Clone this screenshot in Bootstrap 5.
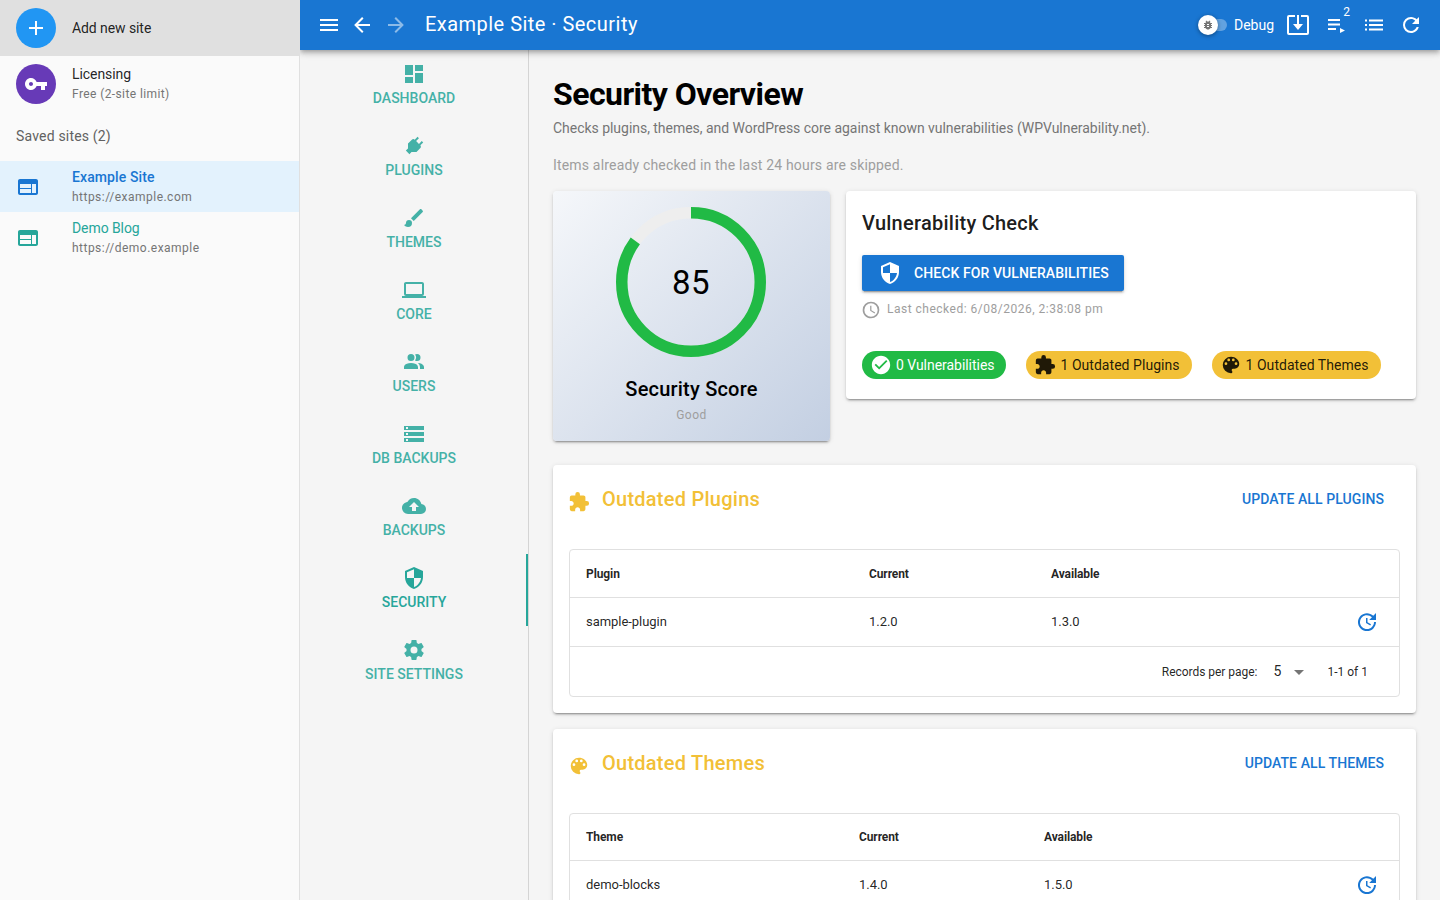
<!DOCTYPE html>
<html lang="en">
<head>
<meta charset="utf-8">
<title>Example Site · Security</title>
<link rel="stylesheet" href="https://cdn.jsdelivr.net/npm/bootstrap@5.3.0/dist/css/bootstrap.min.css">
<style>
html,body{height:100%}
body{font-family:Roboto,"Liberation Sans",sans-serif;font-size:14px;color:rgba(0,0,0,.87);background:#f5f5f5;overflow:hidden}
.ico{width:24px;height:24px;fill:currentColor;flex:none;display:block}
.ico12{width:12px;height:12px}.ico20{width:20px;height:20px}.ico22{width:22px;height:22px}
.drawer{width:300px;flex:none;background:#fafafa;border-right:1px solid #e0e0e0}
.addrow{height:56px;background:#e0e0e0;padding-left:16px;gap:16px;color:rgba(0,0,0,.87)}
.licrow{height:56px;padding-left:16px;gap:16px}
.avatar{width:40px;height:40px;border-radius:50%;color:#fff}
.av-blue{background:#2196f3}.av-purple{background:#673ab7}
.ln1{font-size:14px;line-height:18px;letter-spacing:-.08px}
.ln2{font-size:12px;line-height:18px;margin-top:2px;letter-spacing:.48px;color:#757575}
.ln2b{letter-spacing:.4px}
.addtxt{line-height:20px}
.subhead{height:49px;padding-left:16px;font-size:14px;color:#616161;letter-spacing:.18px;padding-bottom:1px}
.siterow{height:51px;padding-left:16px;gap:32px}
.siterow.sel{background:#e3f2fd;color:#1976d2}
.siterow.sel .ln1{font-weight:500;letter-spacing:.1px}
.siterow.oth{color:#26a69a}
.topbar{height:50px;flex:none;background:#1976d2;color:#fff;box-shadow:0 2px 4px -1px rgba(0,0,0,.2),0 4px 5px rgba(0,0,0,.14),0 1px 10px rgba(0,0,0,.12);position:relative;z-index:3;padding-left:17px;padding-right:17px}
.topttl{font-size:20px;letter-spacing:.47px;margin-left:17px;margin-bottom:2px}
.nav-b{margin-left:9px}.nav-f{margin-left:10px;opacity:.5}
.tog{width:27px;height:12px;border-radius:6px;background:rgba(255,255,255,.32);margin-right:7px}
.togthumb{position:absolute;left:-2px;top:-4px;width:20px;height:20px;border-radius:50%;background:#fff;color:#757575;box-shadow:0 1px 4px rgba(0,0,0,.4)}
.tb-dl{margin-left:12px}.tb-q{margin-left:15px}.tb-n{margin-left:13px}
.qwrap{width:24px}
.qbadge{position:absolute;right:-1px;top:-8px;font-size:12px;line-height:14px}
.rail{width:229px;flex:none;border-right:1px solid #d4d4d4;background:#f5f5f5}
.railit{height:72px;padding-top:12px;color:#26a69a;position:relative;font-size:14px;font-weight:500;text-transform:uppercase;line-height:24px}
.railit>*{opacity:.85}
.railit.act>*{opacity:1}
.railit.act::after{content:"";position:absolute;right:0;top:0;bottom:0;width:2px;background:#26a69a}
.pagearea{padding:24px 24px 0;min-width:0}
.ttl{font-size:32px;line-height:40px;font-weight:700;letter-spacing:-.55px;color:#000;margin:0}
.sub1{font-size:14px;line-height:20px;letter-spacing:-.03px;color:#757575;margin:4px 0 0}
.sub2{font-size:14px;line-height:20px;letter-spacing:.18px;color:#9e9e9e;margin:17px 0 0}
.toprow{margin-top:16px;gap:16px;align-items:flex-start}
.sheet{background:#fff;border-radius:4px;box-shadow:0 3px 1px -2px rgba(0,0,0,.2),0 2px 2px rgba(0,0,0,.14),0 1px 5px rgba(0,0,0,.12)}
.scorecard{width:277px;height:250px;flex:none;background:linear-gradient(135deg,#f5f7fa 0%,#c3cfe2 100%);padding-top:16px}
.ringbox{width:150px;height:150px;position:relative;margin-right:1px}
.ringval{position:absolute;inset:0;font-size:33px;letter-spacing:.5px;color:#000;padding-top:2px}
.scorettl{font-size:20px;font-weight:500;line-height:32px;letter-spacing:.2px;color:#000;margin-top:16px}
.scoregood{font-size:12px;line-height:18px;letter-spacing:.5px;color:#9e9e9e;margin-top:1px}
.vulncard{height:208px;flex:1;padding:16px;min-width:0}
.vulnttl{font-size:20px;font-weight:500;line-height:32px;letter-spacing:.25px;color:rgba(0,0,0,.9);margin:0}
.btncheck{height:36px;width:262px;margin-top:16px;background:#1976d2;color:#fff;border:0;border-radius:2px;font-size:14px;font-weight:500;letter-spacing:.08px;text-transform:uppercase;padding:0 0 0 16px;gap:12px;box-shadow:0 3px 1px -2px rgba(0,0,0,.2),0 2px 2px rgba(0,0,0,.14),0 1px 5px rgba(0,0,0,.12)}
.btncheck:hover{background:#1976d2;color:#fff}
.lastchk{margin-top:8px;height:20px;font-size:12px;letter-spacing:.5px;color:#9e9e9e;gap:6px;margin-left:-1px}
.lastchk svg{margin-top:2px}
.chips{margin-top:32px;gap:20px}
.chipx{height:28px;border-radius:14px;padding:0 12px 0 8px;gap:4px;font-size:14px}
.chip-g{background:#21ba45;color:#fff;letter-spacing:-.04px}
.chip-y{background:#f2c037;color:rgba(0,0,0,.87);letter-spacing:.04px}
.outcard{margin-top:24px;padding:16px}
.outcard2{margin-top:16px}
.outhead{height:68px;align-items:flex-start}
.outico{color:#f2c037;margin-top:10px;margin-right:12px;margin-left:-1px}
.outttl{font-size:20px;font-weight:500;line-height:36px;letter-spacing:.25px;color:#f2c037}
.lnkbtn{color:#1976d2;font-size:14px;font-weight:500;letter-spacing:.08px;text-transform:uppercase;line-height:36px;margin-right:16px;text-decoration:none}
.tblbox{border:1px solid #e0e0e0;border-radius:4px;overflow:hidden}
.tblx{margin:0;table-layout:fixed;font-size:13px;color:rgba(0,0,0,.87)}
.tblx th{height:47px;font-size:12px;font-weight:700;vertical-align:middle;padding:1px 16px 0;border-bottom:1px solid #e0e0e0;box-shadow:none;letter-spacing:-.1px}
.tblx td{height:49px;vertical-align:middle;padding:0 16px;border-bottom:1px solid #e0e0e0;box-shadow:none;letter-spacing:-.04px}
.cp1{width:283px}.cp2{width:182px}.ct1{width:273px}.ct2{width:185px}
.updc{color:#1976d2;text-align:right}
.updc .ico{margin-left:auto;margin-right:4px}
.tblfoot{height:49px;font-size:12px;padding:1px 31px 0 0}
.rpp{margin-right:16px;letter-spacing:-.03px}
.rppv{font-size:14px;width:14px}
.caret{color:#757575;margin-right:16px}
</style>
</head>
<body class="d-flex">
<svg width="0" height="0" class="position-absolute" aria-hidden="true">
<defs>
<symbol id="i-plus" viewBox="0 0 24 24"><path d="M19,13H13V19H11V13H5V11H11V5H13V11H19V13Z"/></symbol>
<symbol id="i-key" viewBox="0 0 24 24"><path d="M12.65 10C11.83 7.67 9.61 6 7 6c-3.31 0-6 2.69-6 6s2.69 6 6 6c2.61 0 4.83-1.67 5.65-4H17v4h4v-4h2v-4H12.65zM7 14c-1.1 0-2-.9-2-2s.9-2 2-2 2 .9 2 2-.9 2-2 2z"/></symbol>
<symbol id="i-web" viewBox="0 0 24 24"><path d="M20 4H4c-1.1 0-1.99.9-1.99 2L2 18c0 1.1.9 2 2 2h16c1.1 0 2-.9 2-2V6c0-1.1-.9-2-2-2zm-5 14H4v-4h11v4zm0-5H4V9h11v4zm5 5h-4V9h4v9z"/></symbol>
<symbol id="i-menu" viewBox="0 0 24 24"><path d="M3,6H21V8H3V6M3,11H21V13H3V11M3,16H21V18H3V16Z"/></symbol>
<symbol id="i-left" viewBox="0 0 24 24"><path d="M20,11V13H8L13.5,18.5L12.08,19.92L4.16,12L12.08,4.08L13.5,5.5L8,11H20Z"/></symbol>
<symbol id="i-right" viewBox="0 0 24 24"><path d="M4,11V13H16L10.5,18.5L11.92,19.92L19.84,12L11.92,4.08L10.5,5.5L16,11H4Z"/></symbol>
<symbol id="i-dash" viewBox="0 0 24 24"><path d="M13,3V9H21V3M13,21H21V11H13M3,21H11V15H3M3,13H11V3H3V13Z"/></symbol>
<symbol id="i-plug" viewBox="0 0 24 24"><path transform="rotate(45 12 12)" d="M16,7V3H14V7H10V3H8V7H8C7,7 6,8 6,9V14.5L9.5,18V21H14.5V18L18,14.5V9C18,8 17,7 16,7Z"/></symbol>
<symbol id="i-brush" viewBox="0 0 24 24"><path d="M20.71,4.63L19.37,3.29C19,2.9 18.35,2.9 17.96,3.29L9,12.25L11.75,15L20.71,6.04C21.1,5.65 21.1,5 20.71,4.63M7,14A3,3 0 0,0 4,17C4,18.31 2.84,19 2,19C2.92,20.22 4.5,21 6,21A4,4 0 0,0 10,17A3,3 0 0,0 7,14Z"/></symbol>
<symbol id="i-laptop" viewBox="0 0 24 24"><path d="M4,6H20V16H4M20,18A2,2 0 0,0 22,16V6C22,4.89 21.1,4 20,4H4C2.89,4 2,4.89 2,6V16A2,2 0 0,0 4,18H0V20H24V18H20Z"/></symbol>
<symbol id="i-users" viewBox="0 0 24 24"><path d="M16 17V19H2V17S2 13 9 13 16 17 16 17M12.5 7.5A3.5 3.5 0 1 0 9 11A3.5 3.5 0 0 0 12.5 7.5M15.94 13A5.32 5.32 0 0 1 18 17V19H22V17S22 13.37 15.94 13M15 4A3.39 3.39 0 0 0 13.07 4.59A5 5 0 0 1 13.07 10.41A3.39 3.39 0 0 0 15 11A3.5 3.5 0 0 0 15 4Z"/></symbol>
<symbol id="i-store" viewBox="0 0 24 24"><path d="M2 20h20v-4H2v4zm2-3h2v2H4v-2zM2 4v4h20V4H2zm4 3H4V5h2v2zm-4 7h20v-4H2v4zm2-3h2v2H4v-2z"/></symbol>
<symbol id="i-cloud" viewBox="0 0 24 24"><path d="M14,13V17H10V13H7L12,8L17,13M19.35,10.03C18.67,6.59 15.64,4 12,4C9.11,4 6.6,5.64 5.35,8.03C2.34,8.36 0,10.9 0,14A6,6 0 0,0 6,20H19A5,5 0 0,0 24,15C24,12.36 21.95,10.22 19.35,10.03Z"/></symbol>
<symbol id="i-shield" viewBox="0 0 24 24"><path d="M12 1L3 5v6c0 5.55 3.84 10.74 9 12 5.16-1.26 9-6.45 9-12V5l-9-4zm0 10.99h7c-.53 4.12-3.28 7.79-7 8.94V12H5V6.3l7-3.11v8.8z"/></symbol>
<symbol id="i-cog" viewBox="0 0 24 24"><path d="M12,15.5A3.5,3.5 0 0,1 8.5,12A3.5,3.5 0 0,1 12,8.5A3.5,3.5 0 0,1 15.5,12A3.5,3.5 0 0,1 12,15.5M19.43,12.97C19.47,12.65 19.5,12.33 19.5,12C19.5,11.67 19.47,11.34 19.43,11L21.54,9.37C21.73,9.22 21.78,8.95 21.66,8.73L19.66,5.27C19.54,5.05 19.27,4.96 19.05,5.05L16.56,6.05C16.04,5.66 15.5,5.32 14.87,5.07L14.5,2.42C14.46,2.18 14.25,2 14,2H10C9.75,2 9.54,2.18 9.5,2.42L9.13,5.07C8.5,5.32 7.96,5.66 7.44,6.05L4.95,5.05C4.73,4.96 4.46,5.05 4.34,5.27L2.34,8.73C2.21,8.95 2.27,9.22 2.46,9.37L4.57,11C4.53,11.34 4.5,11.67 4.5,12C4.5,12.33 4.53,12.65 4.57,12.97L2.46,14.63C2.27,14.78 2.21,15.05 2.34,15.27L4.34,18.73C4.46,18.95 4.73,19.03 4.95,18.95L7.44,17.94C7.96,18.34 8.5,18.68 9.13,18.93L9.5,21.58C9.54,21.82 9.75,22 10,22H14C14.25,22 14.46,21.82 14.5,21.58L14.87,18.93C15.5,18.67 16.04,18.34 16.56,17.94L19.05,18.95C19.27,19.03 19.54,18.95 19.66,18.73L21.66,15.27C21.78,15.05 21.73,14.78 21.54,14.63L19.43,12.97Z"/></symbol>
<symbol id="i-clock" viewBox="0 0 24 24"><path d="M12,20A8,8 0 0,0 20,12A8,8 0 0,0 12,4A8,8 0 0,0 4,12A8,8 0 0,0 12,20M12,2A10,10 0 0,1 22,12A10,10 0 0,1 12,22C6.47,22 2,17.5 2,12A10,10 0 0,1 12,2M12.5,7V12.25L17,14.92L16.25,16.15L11,13V7H12.5Z"/></symbol>
<symbol id="i-check" viewBox="0 0 24 24"><path d="M12 2C6.5 2 2 6.5 2 12S6.5 22 12 22 22 17.5 22 12 17.5 2 12 2M10 17L5 12L6.41 10.59L10 14.17L17.59 6.58L19 8L10 17Z"/></symbol>
<symbol id="i-puzzle" viewBox="0 0 24 24"><path d="M20.5,11H19V7C19,5.89 18.1,5 17,5H13V3.5A2.5,2.5 0 0,0 10.5,1A2.5,2.5 0 0,0 8,3.5V5H4A2,2 0 0,0 2,7V10.8H3.5C5,10.8 6.2,12 6.2,13.5C6.2,15 5,16.2 3.5,16.2H2V20A2,2 0 0,0 4,22H7.8V20.5C7.8,19 9,17.8 10.5,17.8C12,17.8 13.2,19 13.2,20.5V22H17A2,2 0 0,0 19,20V16H20.5A2.5,2.5 0 0,0 23,13.5A2.5,2.5 0 0,0 20.5,11Z"/></symbol>
<symbol id="i-palette" viewBox="0 0 24 24"><path d="M17.5,12A1.5,1.5 0 0,1 16,10.5A1.5,1.5 0 0,1 17.5,9A1.5,1.5 0 0,1 19,10.5A1.5,1.5 0 0,1 17.5,12M14.5,8A1.5,1.5 0 0,1 13,6.5A1.5,1.5 0 0,1 14.5,5A1.5,1.5 0 0,1 16,6.5A1.5,1.5 0 0,1 14.5,8M9.5,8A1.5,1.5 0 0,1 8,6.5A1.5,1.5 0 0,1 9.5,5A1.5,1.5 0 0,1 11,6.5A1.5,1.5 0 0,1 9.5,8M6.5,12A1.5,1.5 0 0,1 5,10.5A1.5,1.5 0 0,1 6.5,9A1.5,1.5 0 0,1 8,10.5A1.5,1.5 0 0,1 6.5,12M12,3A9,9 0 0,0 3,12A9,9 0 0,0 12,21A1.5,1.5 0 0,0 13.5,19.5C13.5,19.11 13.35,18.76 13.11,18.5C12.88,18.23 12.73,17.88 12.73,17.5A1.5,1.5 0 0,1 14.23,16H16A5,5 0 0,0 21,11C21,6.58 16.97,3 12,3Z"/></symbol>
<symbol id="i-update" viewBox="0 0 24 24"><path d="M21,10.12H14.22L16.96,7.3C14.23,4.6 9.81,4.5 7.08,7.2C4.35,9.91 4.35,14.28 7.08,17C9.81,19.7 14.23,19.7 16.96,17C18.32,15.65 19,14.08 19,12.1H21C21,14.08 20.12,16.65 18.36,18.39C14.85,21.87 9.15,21.87 5.64,18.39C2.14,14.92 2.11,9.28 5.62,5.81C9.13,2.34 14.76,2.34 18.27,5.81L21,3V10.12M12.5,8V12.25L16,14.33L15.28,15.54L11,13V8H12.5Z"/></symbol>
<symbol id="i-refresh" viewBox="0 0 24 24"><path d="M17.65,6.35C16.2,4.9 14.21,4 12,4A8,8 0 0,0 4,12A8,8 0 0,0 12,20C15.73,20 18.84,17.45 19.73,14H17.65C16.83,16.33 14.61,18 12,18A6,6 0 0,1 6,12A6,6 0 0,1 12,6C13.66,6 15.14,6.69 16.22,7.78L13,11H20V4L17.65,6.35Z"/></symbol>
<symbol id="i-list" viewBox="0 0 24 24"><path d="M3 6.500h2v2H3zM3 11h2v2H3zM3 15.500h2v2H3zM7 6.500h14v2H7zM7 11h14v2H7zM7 15.500h14v2H7z"/></symbol>
<symbol id="i-queue" viewBox="0 0 24 24"><path d="M3 6h12v2H3zM3 10.500h12v2H3zM3 15h8v2H3zM15 15v5l5-2.500z"/></symbol>
<symbol id="i-dl" viewBox="0 0 24 24"><path d="M9 2H3a2 2 0 0 0-2 2v16a2 2 0 0 0 2 2h18a2 2 0 0 0 2-2V4a2 2 0 0 0-2-2h-6v2h6v16H3V4h6V2z"/><path d="M11 2h2v9h4l-5 6-5-6h4V2z"/></symbol>
<symbol id="i-caret" viewBox="0 0 24 24"><path d="M7,10L12,15L17,10H7Z"/></symbol>
<symbol id="i-bug" viewBox="0 0 24 24"><path d="M14,12H10V10H14M14,16H10V14H14M20,8H17.19C16.74,7.22 16.12,6.55 15.37,6.04L17,4.41L15.59,3L13.42,5.17C12.96,5.06 12.5,5 12,5C11.5,5 11.04,5.06 10.59,5.17L8.41,3L7,4.41L8.62,6.04C7.88,6.55 7.26,7.22 6.81,8H4V10H6.09C6.04,10.33 6,10.66 6,11V12H4V14H6V15C6,15.34 6.04,15.67 6.09,16H4V18H6.81C7.85,19.79 9.78,21 12,21C14.22,21 16.15,19.79 17.19,18H20V16H17.91C17.96,15.67 18,15.34 18,15V14H20V12H18V11C18,10.66 17.96,10.33 17.91,10H20V8Z"/></symbol>
</defs>
</svg>

<aside class="drawer d-flex flex-column">
  <div class="addrow d-flex align-items-center">
    <div class="avatar av-blue d-flex align-items-center justify-content-center"><svg class="ico"><use href="#i-plus"/></svg></div>
    <div class="ln1 addtxt">Add new site</div>
  </div>
  <div class="licrow d-flex align-items-center">
    <div class="avatar av-purple d-flex align-items-center justify-content-center"><svg class="ico"><use href="#i-key"/></svg></div>
    <div><div class="ln1">Licensing</div><div class="ln2 ln2b">Free (2-site limit)</div></div>
  </div>
  <div class="subhead d-flex align-items-center">Saved sites (2)</div>
  <div class="siterow sel d-flex align-items-center">
    <svg class="ico"><use href="#i-web"/></svg>
    <div><div class="ln1">Example Site</div><div class="ln2">https://example.com</div></div>
  </div>
  <div class="siterow oth d-flex align-items-center">
    <svg class="ico"><use href="#i-web"/></svg>
    <div><div class="ln1">Demo Blog</div><div class="ln2">https://demo.example</div></div>
  </div>
</aside>

<div class="flex-grow-1 d-flex flex-column overflow-hidden">
  <header class="topbar d-flex align-items-center">
    <svg class="ico"><use href="#i-menu"/></svg>
    <svg class="ico nav-b"><use href="#i-left"/></svg>
    <svg class="ico nav-f"><use href="#i-right"/></svg>
    <div class="topttl">Example Site · Security</div>
    <div class="ms-auto d-flex align-items-center">
      <div class="tog position-relative"><div class="togthumb d-flex align-items-center justify-content-center"><svg class="ico ico12"><use href="#i-bug"/></svg></div></div>
      <div>Debug</div>
      <svg class="ico tb-dl"><use href="#i-dl"/></svg>
      <div class="qwrap position-relative tb-q"><svg class="ico"><use href="#i-queue"/></svg><span class="qbadge">2</span></div>
      <svg class="ico tb-n"><use href="#i-list"/></svg>
      <svg class="ico tb-n"><use href="#i-refresh"/></svg>
    </div>
  </header>
  <div class="d-flex flex-grow-1 overflow-hidden">
    <nav class="rail">
      <div class="railit d-flex flex-column align-items-center"><svg class="ico"><use href="#i-dash"/></svg><span>Dashboard</span></div>
      <div class="railit d-flex flex-column align-items-center"><svg class="ico"><use href="#i-plug"/></svg><span>Plugins</span></div>
      <div class="railit d-flex flex-column align-items-center"><svg class="ico"><use href="#i-brush"/></svg><span>Themes</span></div>
      <div class="railit d-flex flex-column align-items-center"><svg class="ico"><use href="#i-laptop"/></svg><span>Core</span></div>
      <div class="railit d-flex flex-column align-items-center"><svg class="ico"><use href="#i-users"/></svg><span>Users</span></div>
      <div class="railit d-flex flex-column align-items-center"><svg class="ico"><use href="#i-store"/></svg><span>DB Backups</span></div>
      <div class="railit d-flex flex-column align-items-center"><svg class="ico"><use href="#i-cloud"/></svg><span>Backups</span></div>
      <div class="railit act d-flex flex-column align-items-center"><svg class="ico"><use href="#i-shield"/></svg><span>Security</span></div>
      <div class="railit d-flex flex-column align-items-center"><svg class="ico"><use href="#i-cog"/></svg><span>Site Settings</span></div>
    </nav>
    <main class="pagearea flex-grow-1 overflow-hidden">
      <h1 class="ttl">Security Overview</h1>
      <p class="sub1">Checks plugins, themes, and WordPress core against known vulnerabilities (WPVulnerability.net).</p>
      <p class="sub2">Items already checked in the last 24 hours are skipped.</p>
      <div class="toprow d-flex">
        <div class="sheet scorecard d-flex flex-column align-items-center">
          <div class="ringbox">
            <svg width="150" height="150" viewBox="0 0 150 150" class="d-block">
              <circle cx="75" cy="75" r="69.25" fill="none" stroke="#eeeeee" stroke-width="11.5"/>
              <circle cx="75" cy="75" r="69.25" fill="none" stroke="#21ba45" stroke-width="11.5" stroke-dasharray="369.84 435.11" transform="rotate(-90 75 75)"/>
            </svg>
            <div class="ringval d-flex align-items-center justify-content-center">85</div>
          </div>
          <div class="scorettl">Security Score</div>
          <div class="scoregood">Good</div>
        </div>
        <div class="sheet vulncard">
          <h2 class="vulnttl">Vulnerability Check</h2>
          <button class="btn btncheck d-flex align-items-center" type="button"><svg class="ico"><use href="#i-shield"/></svg><span>Check for vulnerabilities</span></button>
          <div class="lastchk d-flex align-items-center"><svg class="ico ico20"><use href="#i-clock"/></svg><span>Last checked: 6/08/2026, 2:38:08 pm</span></div>
          <div class="chips d-flex">
            <div class="chipx chip-g d-flex align-items-center"><svg class="ico ico22"><use href="#i-check"/></svg><span>0 Vulnerabilities</span></div>
            <div class="chipx chip-y d-flex align-items-center"><svg class="ico ico22"><use href="#i-puzzle"/></svg><span>1 Outdated Plugins</span></div>
            <div class="chipx chip-y d-flex align-items-center"><svg class="ico ico22"><use href="#i-palette"/></svg><span>1 Outdated Themes</span></div>
          </div>
        </div>
      </div>

      <section class="sheet outcard">
        <div class="outhead d-flex">
          <svg class="ico ico22 outico"><use href="#i-puzzle"/></svg>
          <div class="outttl">Outdated Plugins</div>
          <a class="lnkbtn ms-auto" href="#">Update all plugins</a>
        </div>
        <div class="tblbox">
          <table class="table tblx">
            <thead><tr><th class="cp1">Plugin</th><th class="cp2">Current</th><th>Available</th><th></th></tr></thead>
            <tbody><tr><td>sample-plugin</td><td>1.2.0</td><td>1.3.0</td><td class="updc"><svg class="ico"><use href="#i-update"/></svg></td></tr></tbody>
          </table>
          <div class="tblfoot d-flex align-items-center justify-content-end">
            <span class="rpp">Records per page:</span><span class="rppv">5</span><svg class="ico caret"><use href="#i-caret"/></svg><span>1-1 of 1</span>
          </div>
        </div>
      </section>

      <section class="sheet outcard outcard2">
        <div class="outhead d-flex">
          <svg class="ico ico22 outico"><use href="#i-palette"/></svg>
          <div class="outttl">Outdated Themes</div>
          <a class="lnkbtn ms-auto" href="#">Update all themes</a>
        </div>
        <div class="tblbox">
          <table class="table tblx">
            <thead><tr><th class="ct1">Theme</th><th class="ct2">Current</th><th>Available</th><th></th></tr></thead>
            <tbody><tr><td>demo-blocks</td><td>1.4.0</td><td>1.5.0</td><td class="updc"><svg class="ico"><use href="#i-update"/></svg></td></tr></tbody>
          </table>
        </div>
      </section>
    </main>
  </div>
</div>
<script src="https://cdn.jsdelivr.net/npm/bootstrap@5.3.0/dist/js/bootstrap.bundle.min.js"></script>
</body>
</html>
